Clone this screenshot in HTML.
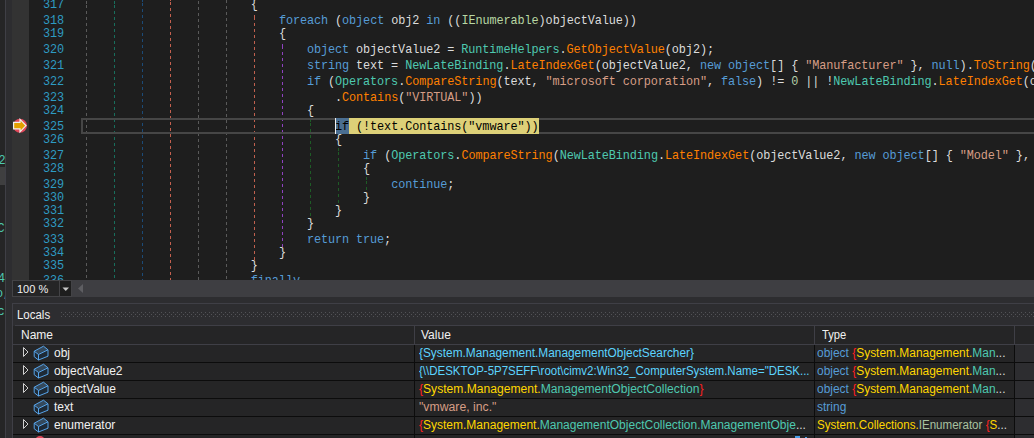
<!DOCTYPE html><html><head><meta charset="utf-8"><style>
*{margin:0;padding:0;box-sizing:border-box}
html,body{width:1034px;height:438px;overflow:hidden;background:#2d2d30}
.a{position:absolute}
.code{font-family:"Liberation Mono",monospace;font-size:11.85px;letter-spacing:-0.09px;white-space:pre;line-height:16px;height:16px}
.ui{font-family:"Liberation Sans",sans-serif;font-size:12px;white-space:pre;line-height:18px;height:18px}
.dash{position:absolute;width:1px}
</style></head><body>

<div class="a" style="left:0;top:0;width:5px;height:438px;background:#252526;overflow:hidden">
<div class="a" style="left:0;top:167px;width:5px;height:18px;background:#3f3f40"></div>
<div class="a code" style="left:-1.5px;top:152.9px;color:#4ec9b0">2</div>
<div class="a code" style="left:-2.5px;top:220.9px;color:#4ec9b0">C</div>
<div class="a code" style="left:-2px;top:271.4px;color:#4ec9b0">4</div>
<div class="a code" style="left:-4px;top:285.9px;color:#4ec9b0">o,</div>
<div class="a code" style="left:-2.5px;top:304.4px;color:#4ec9b0">c</div>
</div>
<div class="a" style="left:5px;top:0;width:1px;height:438px;background:#3f3f46"></div>
<div class="a" style="left:6px;top:0;width:6px;height:438px;background:#2d2d30"></div>
<div class="a" style="left:12px;top:0;width:1022px;height:280px;background:#1e1e1e;overflow:hidden">
<div class="a" style="left:0;top:0;width:17px;height:280px;background:#333333"></div>
<div class="dash" style="left:74px;top:0px;height:280px;background:repeating-linear-gradient(to bottom,#5a5a5a 0 3px,transparent 3px 6px);background-position:0 5px"></div>
<div class="dash" style="left:102px;top:0px;height:280px;background:repeating-linear-gradient(to bottom,#186e5c 0 3px,transparent 3px 6px);background-position:0 5px"></div>
<div class="dash" style="left:130px;top:0px;height:280px;background:repeating-linear-gradient(to bottom,#1c4a76 0 3px,transparent 3px 6px);background-position:0 3px"></div>
<div class="dash" style="left:158px;top:0px;height:280px;background:repeating-linear-gradient(to bottom,#c4604e 0 3px,transparent 3px 6px);background-position:0 2px"></div>
<div class="dash" style="left:186px;top:0px;height:280px;background:repeating-linear-gradient(to bottom,#5a5a5a 0 3px,transparent 3px 6px);background-position:0 1px"></div>
<div class="dash" style="left:214px;top:0px;height:280px;background:repeating-linear-gradient(to bottom,#5a5a5a 0 3px,transparent 3px 6px);background-position:0 0px"></div>
<div class="dash" style="left:242px;top:12px;height:248px;background:repeating-linear-gradient(to bottom,#c0604e 0 3px,transparent 3px 6px);background-position:0 5px"></div>
<div class="dash" style="left:270px;top:41px;height:206px;background:repeating-linear-gradient(to bottom,#8f42c0 0 3px,transparent 3px 6px);background-position:0 5px"></div>
<div class="dash" style="left:298px;top:118px;height:100px;background:repeating-linear-gradient(to bottom,#1e5c26 0 3px,transparent 3px 6px);background-position:0 5px"></div>
<div class="dash" style="left:326px;top:147px;height:58px;background:repeating-linear-gradient(to bottom,#1e5c26 0 3px,transparent 3px 6px);background-position:0 5px"></div>
<div class="dash" style="left:354px;top:176px;height:16px;background:repeating-linear-gradient(to bottom,#1e5c26 0 3px,transparent 3px 6px);background-position:0 5px"></div>
<div class="a" style="left:69px;top:118px;width:1000px;height:16px;border:2px solid #464646"></div>
<div class="a code" style="left:0;width:52px;text-align:right;top:-3.1px;color:#2e9bc2">317</div>
<div class="a code" style="left:0;width:52px;text-align:right;top:12.9px;color:#2e9bc2">318</div>
<div class="a code" style="left:0;width:52px;text-align:right;top:25.9px;color:#2e9bc2">319</div>
<div class="a code" style="left:0;width:52px;text-align:right;top:41.9px;color:#2e9bc2">320</div>
<div class="a code" style="left:0;width:52px;text-align:right;top:57.9px;color:#2e9bc2">321</div>
<div class="a code" style="left:0;width:52px;text-align:right;top:73.9px;color:#2e9bc2">322</div>
<div class="a code" style="left:0;width:52px;text-align:right;top:89.9px;color:#2e9bc2">323</div>
<div class="a code" style="left:0;width:52px;text-align:right;top:102.9px;color:#2e9bc2">324</div>
<div class="a code" style="left:0;width:52px;text-align:right;top:118.9px;color:#2e9bc2">325</div>
<div class="a code" style="left:0;width:52px;text-align:right;top:131.9px;color:#2e9bc2">326</div>
<div class="a code" style="left:0;width:52px;text-align:right;top:147.9px;color:#2e9bc2">327</div>
<div class="a code" style="left:0;width:52px;text-align:right;top:160.9px;color:#2e9bc2">328</div>
<div class="a code" style="left:0;width:52px;text-align:right;top:176.9px;color:#2e9bc2">329</div>
<div class="a code" style="left:0;width:52px;text-align:right;top:189.9px;color:#2e9bc2">330</div>
<div class="a code" style="left:0;width:52px;text-align:right;top:202.9px;color:#2e9bc2">331</div>
<div class="a code" style="left:0;width:52px;text-align:right;top:215.9px;color:#2e9bc2">332</div>
<div class="a code" style="left:0;width:52px;text-align:right;top:231.9px;color:#2e9bc2">333</div>
<div class="a code" style="left:0;width:52px;text-align:right;top:244.9px;color:#2e9bc2">334</div>
<div class="a code" style="left:0;width:52px;text-align:right;top:257.9px;color:#2e9bc2">335</div>
<div class="a code" style="left:0;width:52px;text-align:right;top:272.9px;color:#2e9bc2">336</div>
<div class="a code" style="left:238.8px;top:-3.1px"><span style="color:#dcdcdc">{</span></div>
<div class="a code" style="left:266.9px;top:12.9px"><span style="color:#569cd6">foreach</span><span style="color:#dcdcdc"> (</span><span style="color:#569cd6">object</span><span style="color:#dcdcdc"> obj2 </span><span style="color:#569cd6">in</span><span style="color:#dcdcdc"> ((</span><span style="color:#b8d7a3">IEnumerable</span><span style="color:#dcdcdc">)objectValue))</span></div>
<div class="a code" style="left:266.9px;top:25.9px"><span style="color:#dcdcdc">{</span></div>
<div class="a code" style="left:294.9px;top:41.9px"><span style="color:#569cd6">object</span><span style="color:#dcdcdc"> objectValue2 = </span><span style="color:#4ec9b0">RuntimeHelpers</span><span style="color:#dcdcdc">.</span><span style="color:#ff8000">GetObjectValue</span><span style="color:#dcdcdc">(obj2);</span></div>
<div class="a code" style="left:294.9px;top:57.9px"><span style="color:#569cd6">string</span><span style="color:#dcdcdc"> text = </span><span style="color:#4ec9b0">NewLateBinding</span><span style="color:#dcdcdc">.</span><span style="color:#ff8000">LateIndexGet</span><span style="color:#dcdcdc">(objectValue2, </span><span style="color:#569cd6">new</span><span style="color:#dcdcdc"> </span><span style="color:#569cd6">object</span><span style="color:#dcdcdc">[] { </span><span style="color:#d69d85">&quot;Manufacturer&quot;</span><span style="color:#dcdcdc"> }, </span><span style="color:#569cd6">null</span><span style="color:#dcdcdc">).</span><span style="color:#ff8000">ToString</span><span style="color:#dcdcdc">(</span></div>
<div class="a code" style="left:294.9px;top:73.9px"><span style="color:#569cd6">if</span><span style="color:#dcdcdc"> (</span><span style="color:#4ec9b0">Operators</span><span style="color:#dcdcdc">.</span><span style="color:#ff8000">CompareString</span><span style="color:#dcdcdc">(text, </span><span style="color:#d69d85">&quot;microsoft corporation&quot;</span><span style="color:#dcdcdc">, </span><span style="color:#569cd6">false</span><span style="color:#dcdcdc">) != </span><span style="color:#b5cea8">0</span><span style="color:#dcdcdc"> || !</span><span style="color:#4ec9b0">NewLateBinding</span><span style="color:#dcdcdc">.</span><span style="color:#ff8000">LateIndexGet</span><span style="color:#dcdcdc">(o</span></div>
<div class="a code" style="left:323.0px;top:89.9px"><span style="color:#dcdcdc">.</span><span style="color:#ff8000">Contains</span><span style="color:#dcdcdc">(</span><span style="color:#d69d85">&quot;VIRTUAL&quot;</span><span style="color:#dcdcdc">))</span></div>
<div class="a code" style="left:294.9px;top:102.9px"><span style="color:#dcdcdc">{</span></div>
<div class="a" style="left:323.0px;top:118px;width:203.6px;height:16px;background:#ddd078"></div>
<div class="a" style="left:323.0px;top:118px;width:14px;height:16px;background:#4a6e91"></div>
<div class="a code" style="left:323.0px;top:118.9px;color:#000">if (!text.Contains("vmware"))</div>
<div class="a" style="left:323.0px;top:118px;width:1px;height:16px;background:#f0f0f0"></div>
<div class="a code" style="left:323.0px;top:131.9px"><span style="color:#dcdcdc">{</span></div>
<div class="a code" style="left:351.1px;top:147.9px"><span style="color:#569cd6">if</span><span style="color:#dcdcdc"> (</span><span style="color:#4ec9b0">Operators</span><span style="color:#dcdcdc">.</span><span style="color:#ff8000">CompareString</span><span style="color:#dcdcdc">(</span><span style="color:#4ec9b0">NewLateBinding</span><span style="color:#dcdcdc">.</span><span style="color:#ff8000">LateIndexGet</span><span style="color:#dcdcdc">(objectValue2, </span><span style="color:#569cd6">new</span><span style="color:#dcdcdc"> </span><span style="color:#569cd6">object</span><span style="color:#dcdcdc">[] { </span><span style="color:#d69d85">&quot;Model&quot;</span><span style="color:#dcdcdc"> }, </span></div>
<div class="a code" style="left:351.1px;top:160.9px"><span style="color:#dcdcdc">{</span></div>
<div class="a code" style="left:379.2px;top:176.9px"><span style="color:#569cd6">continue</span><span style="color:#dcdcdc">;</span></div>
<div class="a code" style="left:351.1px;top:189.9px"><span style="color:#dcdcdc">}</span></div>
<div class="a code" style="left:323.0px;top:202.9px"><span style="color:#dcdcdc">}</span></div>
<div class="a code" style="left:294.9px;top:215.9px"><span style="color:#dcdcdc">}</span></div>
<div class="a code" style="left:294.9px;top:231.9px"><span style="color:#569cd6">return</span><span style="color:#dcdcdc"> </span><span style="color:#569cd6">true</span><span style="color:#dcdcdc">;</span></div>
<div class="a code" style="left:266.9px;top:244.9px"><span style="color:#dcdcdc">}</span></div>
<div class="a code" style="left:238.8px;top:257.9px"><span style="color:#dcdcdc">}</span></div>
<div class="a code" style="left:238.8px;top:272.9px"><span style="color:#569cd6">finally</span></div>
<svg class="a" style="left:0;top:110px" width="17" height="24" viewBox="0 0 17 24">
<circle cx="8" cy="15.8" r="7" fill="#e0485a"/>
<path d="M1.6 12.3 H8 V9.4 L14 15.6 L8 21.8 V18.9 H1.6 Z" fill="#e2a000" stroke="#f0f0f0" stroke-width="1.2"/>
</svg>
</div>
<div class="a" style="left:12px;top:280px;width:1022px;height:17px;background:#3e3e42"></div>
<div class="a" style="left:12px;top:280px;width:60px;height:17px;background:#252526;border:1px solid #434346"></div>
<div class="a" style="left:60px;top:281px;width:11px;height:15px;background:#1e1e1e"></div>
<div class="a" style="left:59px;top:281px;width:1px;height:15px;background:#434346"></div>
<div class="a ui" style="left:17px;top:280px;color:#f1f1f1;font-size:11px">100 %</div>
<svg class="a" style="left:62px;top:287px" width="8" height="5"><path d="M0.5 0.5 H7 L3.75 4 Z" fill="#c8c8c8"/></svg>
<svg class="a" style="left:77px;top:284px" width="7" height="10"><path d="M6 0 V9 L1 4.5 Z" fill="#5e5e62"/></svg>
<div class="a" style="left:12px;top:303px;width:1022px;height:135px;background:#2d2d30;border-left:1px solid #3f3f46;border-top:1px solid #3f3f46"></div>
<div class="a ui" style="left:17px;top:306px;color:#f1f1f1;transform-origin:0 0;transform:scaleX(0.955)">Locals</div>
<svg class="a" style="left:61px;top:312px" width="973" height="5"><defs><pattern id="dp" width="4" height="4" patternUnits="userSpaceOnUse"><rect x="0" y="0" width="1" height="1" fill="#525256"/><rect x="2" y="2" width="1" height="1" fill="#525256"/></pattern></defs><rect width="973" height="5" fill="url(#dp)"/></svg>
<div class="a" style="left:15px;top:325px;width:1019px;height:1px;background:#3f3f46"></div>
<div class="a" style="left:13px;top:326px;width:1021px;height:18px;background:#252526"></div>
<div class="a" style="left:13px;top:344px;width:1021px;height:1px;background:#3f3f46"></div>
<div class="a" style="left:414px;top:326px;width:1px;height:18px;background:#3f3f46"></div>
<div class="a" style="left:814px;top:326px;width:1px;height:18px;background:#3f3f46"></div>
<div class="a" style="left:1014px;top:326px;width:1px;height:18px;background:#3f3f46"></div>
<div class="a ui" style="left:21px;top:326px;color:#f1f1f1">Name</div>
<div class="a ui" style="left:421px;top:326px;color:#f1f1f1">Value</div>
<div class="a ui" style="left:821.5px;top:326px;color:#f1f1f1;transform-origin:0 0;transform:scaleX(0.93)">Type</div>
<div class="a" style="left:13px;top:345px;width:1001px;height:17px;background:#252526"></div>
<div class="a" style="left:13px;top:362px;width:1021px;height:1px;background:#0c0c0c"></div>
<div class="a" style="left:414px;top:345px;width:1px;height:18px;background:#0c0c0c"></div>
<div class="a" style="left:814px;top:345px;width:1px;height:18px;background:#0c0c0c"></div>
<div class="a" style="left:1014px;top:345px;width:1px;height:18px;background:#0c0c0c"></div>
<div class="a" style="left:1015px;top:345px;width:19px;height:17px;background:#2d2d30"></div>
<div class="a" style="left:13px;top:363px;width:1001px;height:17px;background:#252526"></div>
<div class="a" style="left:13px;top:380px;width:1021px;height:1px;background:#0c0c0c"></div>
<div class="a" style="left:414px;top:363px;width:1px;height:18px;background:#0c0c0c"></div>
<div class="a" style="left:814px;top:363px;width:1px;height:18px;background:#0c0c0c"></div>
<div class="a" style="left:1014px;top:363px;width:1px;height:18px;background:#0c0c0c"></div>
<div class="a" style="left:1015px;top:363px;width:19px;height:17px;background:#2d2d30"></div>
<div class="a" style="left:13px;top:381px;width:1001px;height:17px;background:#252526"></div>
<div class="a" style="left:13px;top:398px;width:1021px;height:1px;background:#0c0c0c"></div>
<div class="a" style="left:414px;top:381px;width:1px;height:18px;background:#0c0c0c"></div>
<div class="a" style="left:814px;top:381px;width:1px;height:18px;background:#0c0c0c"></div>
<div class="a" style="left:1014px;top:381px;width:1px;height:18px;background:#0c0c0c"></div>
<div class="a" style="left:1015px;top:381px;width:19px;height:17px;background:#2d2d30"></div>
<div class="a" style="left:13px;top:399px;width:1001px;height:17px;background:#252526"></div>
<div class="a" style="left:13px;top:416px;width:1021px;height:1px;background:#0c0c0c"></div>
<div class="a" style="left:414px;top:399px;width:1px;height:18px;background:#0c0c0c"></div>
<div class="a" style="left:814px;top:399px;width:1px;height:18px;background:#0c0c0c"></div>
<div class="a" style="left:1014px;top:399px;width:1px;height:18px;background:#0c0c0c"></div>
<div class="a" style="left:1015px;top:399px;width:19px;height:17px;background:#2d2d30"></div>
<div class="a" style="left:13px;top:417px;width:1001px;height:17px;background:#252526"></div>
<div class="a" style="left:13px;top:434px;width:1021px;height:1px;background:#0c0c0c"></div>
<div class="a" style="left:414px;top:417px;width:1px;height:18px;background:#0c0c0c"></div>
<div class="a" style="left:814px;top:417px;width:1px;height:18px;background:#0c0c0c"></div>
<div class="a" style="left:1014px;top:417px;width:1px;height:18px;background:#0c0c0c"></div>
<div class="a" style="left:1015px;top:417px;width:19px;height:17px;background:#2d2d30"></div>
<div class="a" style="left:13px;top:435px;width:1001px;height:17px;background:#252526"></div>
<div class="a" style="left:13px;top:452px;width:1021px;height:1px;background:#0c0c0c"></div>
<div class="a" style="left:414px;top:435px;width:1px;height:18px;background:#0c0c0c"></div>
<div class="a" style="left:814px;top:435px;width:1px;height:18px;background:#0c0c0c"></div>
<div class="a" style="left:1014px;top:435px;width:1px;height:18px;background:#0c0c0c"></div>
<div class="a" style="left:1015px;top:435px;width:19px;height:17px;background:#2d2d30"></div>
<svg class="a" style="left:22px;top:346px" width="8" height="12"><path d="M1.5 1.5 L6 6 L1.5 10.5 Z" fill="none" stroke="#d0d0d0" stroke-width="1"/></svg>
<svg class="a" style="left:33px;top:345px" width="16" height="17" viewBox="0 0 16 17"><path d="M1.2 6.2 L10.5 1.2 L15 4.8 L5.5 9.5 Z" fill="#34495c"/><path d="M1.2 6.2 L5.5 9.5 L5.5 15 L1.2 11.7 Z M5.5 9.5 L15 4.8 L15 11.2 L5.5 15 Z" fill="#1e2a36"/><path d="M1.2 6.2 L10.5 1.2 L15 4.8 L15 11.2 L5.5 15 L1.2 11.7 Z M1.2 6.2 L5.5 9.5 L15 4.8 M5.5 9.5 V15" fill="none" stroke="#5aaaf2" stroke-width="0.95" stroke-linejoin="round"/></svg>
<div class="a ui" style="left:54px;top:344px;color:#f1f1f1">obj</div>
<div class="a ui" style="left:419px;top:344px;transform-origin:0 0;transform:scaleX(0.9885)"><span style="color:#5cd4ff">{System.Management.ManagementObjectSearcher}</span></div>
<div class="a ui" style="left:817px;top:344px;transform-origin:0 0;transform:scaleX(0.995)"><span style="color:#569cd6">object</span><span style="color:#dcdcdc"> </span><span style="color:#ff2020">{</span><span style="color:#ffd700">System.Management.</span><span style="color:#4ec9b0">Man</span><span style="color:#dcdcdc">...</span></div>
<svg class="a" style="left:22px;top:364px" width="8" height="12"><path d="M1.5 1.5 L6 6 L1.5 10.5 Z" fill="none" stroke="#d0d0d0" stroke-width="1"/></svg>
<svg class="a" style="left:33px;top:363px" width="16" height="17" viewBox="0 0 16 17"><path d="M1.2 6.2 L10.5 1.2 L15 4.8 L5.5 9.5 Z" fill="#34495c"/><path d="M1.2 6.2 L5.5 9.5 L5.5 15 L1.2 11.7 Z M5.5 9.5 L15 4.8 L15 11.2 L5.5 15 Z" fill="#1e2a36"/><path d="M1.2 6.2 L10.5 1.2 L15 4.8 L15 11.2 L5.5 15 L1.2 11.7 Z M1.2 6.2 L5.5 9.5 L15 4.8 M5.5 9.5 V15" fill="none" stroke="#5aaaf2" stroke-width="0.95" stroke-linejoin="round"/></svg>
<div class="a ui" style="left:54px;top:362px;color:#f1f1f1">objectValue2</div>
<div class="a ui" style="left:419px;top:362px;transform-origin:0 0;transform:scaleX(0.956)"><span style="color:#5cd4ff">{\\DESKTOP-5P7SEFF\root\cimv2:Win32_ComputerSystem.Name=&quot;DESK...</span></div>
<div class="a ui" style="left:817px;top:362px;transform-origin:0 0;transform:scaleX(0.995)"><span style="color:#569cd6">object</span><span style="color:#dcdcdc"> </span><span style="color:#ff2020">{</span><span style="color:#ffd700">System.Management.</span><span style="color:#4ec9b0">Man</span><span style="color:#dcdcdc">...</span></div>
<svg class="a" style="left:22px;top:382px" width="8" height="12"><path d="M1.5 1.5 L6 6 L1.5 10.5 Z" fill="none" stroke="#d0d0d0" stroke-width="1"/></svg>
<svg class="a" style="left:33px;top:381px" width="16" height="17" viewBox="0 0 16 17"><path d="M1.2 6.2 L10.5 1.2 L15 4.8 L5.5 9.5 Z" fill="#34495c"/><path d="M1.2 6.2 L5.5 9.5 L5.5 15 L1.2 11.7 Z M5.5 9.5 L15 4.8 L15 11.2 L5.5 15 Z" fill="#1e2a36"/><path d="M1.2 6.2 L10.5 1.2 L15 4.8 L15 11.2 L5.5 15 L1.2 11.7 Z M1.2 6.2 L5.5 9.5 L15 4.8 M5.5 9.5 V15" fill="none" stroke="#5aaaf2" stroke-width="0.95" stroke-linejoin="round"/></svg>
<div class="a ui" style="left:54px;top:380px;color:#f1f1f1">objectValue</div>
<div class="a ui" style="left:419px;top:380px;transform-origin:0 0;transform:scaleX(1.008)"><span style="color:#ff2020">{</span><span style="color:#ffd700">System.Management.</span><span style="color:#4ec9b0">ManagementObjectCollection</span><span style="color:#ff2020">}</span></div>
<div class="a ui" style="left:817px;top:380px;transform-origin:0 0;transform:scaleX(0.995)"><span style="color:#569cd6">object</span><span style="color:#dcdcdc"> </span><span style="color:#ff2020">{</span><span style="color:#ffd700">System.Management.</span><span style="color:#4ec9b0">Man</span><span style="color:#dcdcdc">...</span></div>
<svg class="a" style="left:33px;top:399px" width="16" height="17" viewBox="0 0 16 17"><path d="M1.2 6.2 L10.5 1.2 L15 4.8 L5.5 9.5 Z" fill="#34495c"/><path d="M1.2 6.2 L5.5 9.5 L5.5 15 L1.2 11.7 Z M5.5 9.5 L15 4.8 L15 11.2 L5.5 15 Z" fill="#1e2a36"/><path d="M1.2 6.2 L10.5 1.2 L15 4.8 L15 11.2 L5.5 15 L1.2 11.7 Z M1.2 6.2 L5.5 9.5 L15 4.8 M5.5 9.5 V15" fill="none" stroke="#5aaaf2" stroke-width="0.95" stroke-linejoin="round"/></svg>
<div class="a ui" style="left:54px;top:398px;color:#f1f1f1">text</div>
<div class="a ui" style="left:419px;top:398px;transform-origin:0 0;transform:scaleX(1.02)"><span style="color:#d69d85">&quot;vmware, inc.&quot;</span></div>
<div class="a ui" style="left:817px;top:398px;transform-origin:0 0;transform:scaleX(1)"><span style="color:#569cd6">string</span></div>
<svg class="a" style="left:22px;top:418px" width="8" height="12"><path d="M1.5 1.5 L6 6 L1.5 10.5 Z" fill="none" stroke="#d0d0d0" stroke-width="1"/></svg>
<svg class="a" style="left:33px;top:417px" width="16" height="17" viewBox="0 0 16 17"><path d="M1.2 6.2 L10.5 1.2 L15 4.8 L5.5 9.5 Z" fill="#34495c"/><path d="M1.2 6.2 L5.5 9.5 L5.5 15 L1.2 11.7 Z M5.5 9.5 L15 4.8 L15 11.2 L5.5 15 Z" fill="#1e2a36"/><path d="M1.2 6.2 L10.5 1.2 L15 4.8 L15 11.2 L5.5 15 L1.2 11.7 Z M1.2 6.2 L5.5 9.5 L15 4.8 M5.5 9.5 V15" fill="none" stroke="#5aaaf2" stroke-width="0.95" stroke-linejoin="round"/></svg>
<div class="a ui" style="left:54px;top:416px;color:#f1f1f1">enumerator</div>
<div class="a ui" style="left:419px;top:416px;transform-origin:0 0;transform:scaleX(1.0)"><span style="color:#ff2020">{</span><span style="color:#ffd700">System.Management.</span><span style="color:#4ec9b0">ManagementObjectCollection.ManagementObje</span><span style="color:#dcdcdc">...</span></div>
<div class="a ui" style="left:817px;top:416px;transform-origin:0 0;transform:scaleX(0.965)"><span style="color:#ffd700">System.Collections.</span><span style="color:#a9c2a0">IEnumerator</span><span style="color:#dcdcdc"> </span><span style="color:#ff2020">{</span><span style="color:#ffd700">S</span><span style="color:#dcdcdc">...</span></div>
<svg class="a" style="left:35px;top:435px" width="12" height="3"><circle cx="5" cy="6" r="5" fill="#e0485a"/></svg>
<div class="a" style="left:795px;top:436px;width:5px;height:2px;background:#4a9ee8"></div>
<div class="a" style="left:805px;top:437px;width:2px;height:1px;background:#4a9ee8"></div>
</body></html>
